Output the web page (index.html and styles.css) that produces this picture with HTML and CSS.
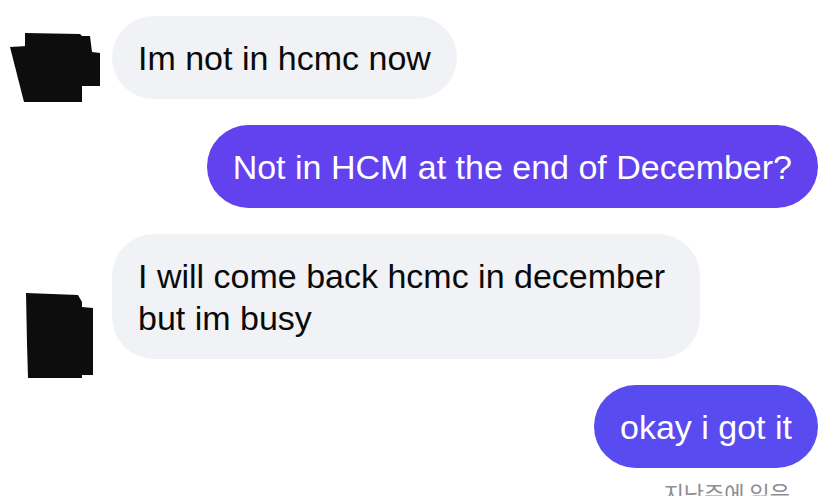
FILE: index.html
```html
<!DOCTYPE html>
<html lang="en">
<head>
  <meta charset="UTF-8">
  <meta name="viewport" content="width=device-width, initial-scale=1.0">
  <title>Chat</title>
  <link rel="stylesheet" href="styles.css">
</head>
<body>
  <div class="chat">
    <div class="row in">
      <svg class="avatar" width="112" height="83" viewBox="0 0 112 83">
        <polygon points="10,31 27,30 27,86 24,86"/>
        <polygon points="25,17 80,18 82,20 90,20 92,36 100,37 100,70 82,70 82,86 25,86"/>
      </svg>
      <div class="bubble gray">Im not in hcmc now</div>
    </div>

    <div class="row out">
      <div class="bubble purple">Not in HCM at the end of December?</div>
    </div>

    <div class="row in">
      <svg class="avatar" width="112" height="125" viewBox="0 0 112 125">
        <polygon points="26,59 78,61 82,68 82,73 93,74 93,141 82,141 82,144 28,144 27,110"/>
      </svg>
      <div class="bubble gray wide">I will come back hcmc in december but im busy</div>
    </div>

    <div class="row out">
      <div class="bubble purple blue">okay i got it</div>
    </div>

    <div class="seen">지난주에 읽음</div>
  </div>
</body>
</html>
```

FILE: styles.css
```css
* {
  margin: 0;
  padding: 0;
  box-sizing: border-box;
}
body {
  background: #fff;
  font-family: "Liberation Sans", Arial, sans-serif;
  overflow: hidden;
}
.chat {
  display: flex;
  flex-direction: column;
  gap: 26px;
  padding: 16px 17px 0 0;
}
.row {
  display: flex;
  align-items: flex-start;
}
.row.out {
  justify-content: flex-end;
}
.avatar {
  flex: none;
  overflow: visible;
  fill: #0d0d0d;
}
.bubble {
  font-size: 34px;
  line-height: 42px;
  padding: 20.5px 26px;
  border-radius: 42px;
  max-width: 660px;
  white-space: nowrap;
}
.bubble.gray {
  background: #f1f2f5;
  color: #0a0a0a;
}
.bubble.wide {
  width: 588px;
  white-space: normal;
}
.bubble.purple {
  background: #6142ee;
  color: #fff;
}
.bubble.blue {
  background: #584bef;
}
.seen {
  align-self: flex-end;
  margin-top: -17px;
  padding-right: 28px;
  font-family: "Noto Sans CJK KR", sans-serif;
  font-size: 22px;
  line-height: 30px;
  color: #8e8e93;
}
```
